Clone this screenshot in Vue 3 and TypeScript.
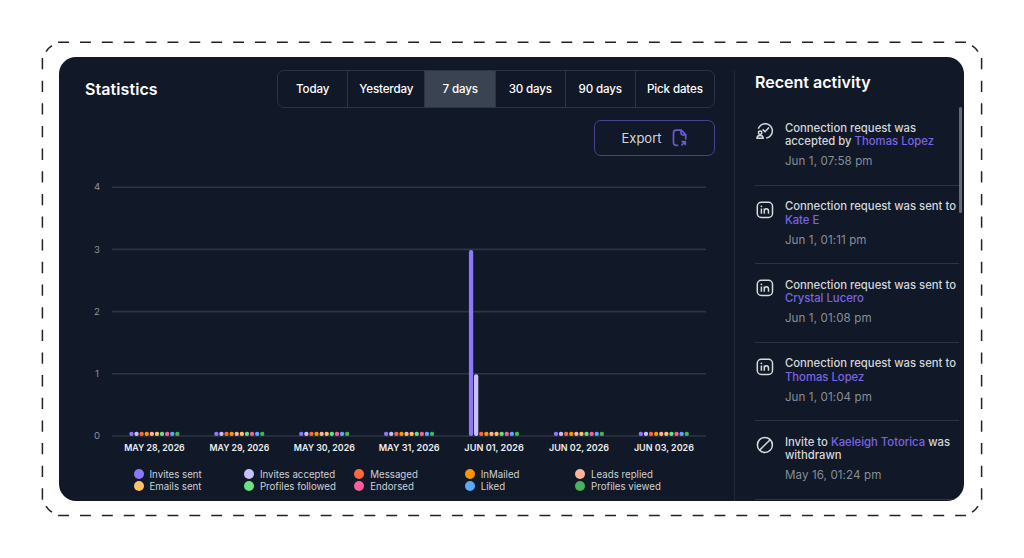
<script setup lang="ts">
import { ref } from "vue";

interface Activity {
  icon: "accepted" | "linkedin" | "withdrawn";
  before: string;
  name: string;
  after?: string;
  date: string;
}

const ranges = ["Today", "Yesterday", "7 days", "30 days", "90 days", "Pick dates"];
const activeRange = ref("7 days");

const series = [
  { label: "Invites sent", color: "#8b78ff" },
  { label: "Invites accepted", color: "#c9bfff" },
  { label: "Messaged", color: "#ff6838" },
  { label: "InMailed", color: "#ff9500" },
  { label: "Leads replied", color: "#ffb39e" },
  { label: "Emails sent", color: "#ffc266" },
  { label: "Profiles followed", color: "#68e384" },
  { label: "Endorsed", color: "#ff5c9c" },
  { label: "Liked", color: "#57abff" },
  { label: "Profiles viewed", color: "#43b659" },
];

const days = [
  { label: "MAY 28, 2026", width: 60.5, values: [] as number[] },
  { label: "MAY 29, 2026", width: 60, values: [] },
  { label: "MAY 30, 2026", width: 61, values: [] },
  { label: "MAY 31, 2026", width: 61, values: [] },
  { label: "JUN 01, 2026", width: 59.5, values: [3, 1] },
  { label: "JUN 02, 2026", width: 60, values: [] },
  { label: "JUN 03, 2026", width: 60, values: [] },
];

// chart geometry
const baseline = 266;
const unit = 62.2;
const step = 84.9;
const dayCenter = (i: number) => 69.5 + i * step;
const barX = (day: number, s: number) => dayCenter(day) - 25.2 + s * 5.1;
const barHeight = (value: number) => (value ? value * unit - 0.5 : 4.2);

const activities: Activity[] = [
  {
    icon: "accepted",
    before: "Connection request was accepted by ",
    name: "Thomas Lopez",
    date: "Jun 1, 07:58 pm",
  },
  {
    icon: "linkedin",
    before: "Connection request was sent to ",
    name: "Kate E",
    date: "Jun 1, 01:11 pm",
  },
  {
    icon: "linkedin",
    before: "Connection request was sent to ",
    name: "Crystal Lucero",
    date: "Jun 1, 01:08 pm",
  },
  {
    icon: "linkedin",
    before: "Connection request was sent to ",
    name: "Thomas Lopez",
    date: "Jun 1, 01:04 pm",
  },
  {
    icon: "withdrawn",
    before: "Invite to ",
    name: "Kaeleigh Totorica",
    after: " was withdrawn",
    date: "May 16, 01:24 pm",
  },
];
</script>

<template>
  <div class="page">
    <svg class="frame" width="1024" height="558" viewBox="0 0 1024 558">
      <path d="M58.1 42.3H966M58.1 515.4H966" stroke-dasharray="10.9 10.98" />
      <path d="M42.4 58V500M981.6 58V500" stroke-dasharray="11.3 11.35" />
      <path
        d="M46 51.6Q48.4 47.8 52 45.6M978 51.6Q975.6 47.8 972 45.6M46 506.2Q48.4 510 52 512.2M978 506.2Q975.6 510 972 512.2"
      />
    </svg>
    <div class="card">
      <main class="stats">
        <div class="head">
          <h1>Statistics</h1>
          <div class="ranges">
            <button
              v-for="range in ranges"
              :key="range"
              :class="{ active: range === activeRange }"
              @click="activeRange = range"
            >
              {{ range }}
            </button>
          </div>
        </div>
        <button class="export">
          <span>Export</span>
          <svg width="16" height="18" viewBox="0 0 16 18">
            <path
              d="M6.2 16.3H4.2Q1.5 16.3 1.5 13.6V3.9Q1.5 1.2 4.2 1.2H9.3L13.7 5.6V10.4"
            />
            <path d="M9 1.4V4.2Q9 5.8 10.6 5.8H13.5" />
            <path d="M9.5 12.6H13.3V16.3M13 12.9L9.4 16.5" />
          </svg>
        </button>

        <svg class="chart" width="630" height="290" viewBox="0 0 630 290">
          <g v-for="n in 5" :key="n">
            <line
              class="grid"
              x1="27"
              x2="621"
              :y1="baseline - (n - 1) * unit"
              :y2="baseline - (n - 1) * unit"
            />
            <text class="tick" x="12" :y="baseline - (n - 1) * unit + 3.2">
              {{ n - 1 }}
            </text>
          </g>
          <g v-for="(day, i) in days" :key="day.label">
            <rect
              v-for="(s, j) in series"
              :key="s.label"
              :x="barX(i, j)"
              :y="baseline - barHeight(day.values[j])"
              width="4.3"
              :height="barHeight(day.values[j])"
              rx="2"
              :fill="s.color"
            />
            <text
              class="day"
              :x="dayCenter(i)"
              y="281"
              :textLength="day.width"
              lengthAdjust="spacingAndGlyphs"
            >
              {{ day.label }}
            </text>
          </g>
        </svg>

        <ul class="legend">
          <li v-for="s in series" :key="s.label">
            <i :style="{ background: s.color }"></i>{{ s.label }}
          </li>
        </ul>
      </main>

      <aside class="recent">
        <h2>Recent activity</h2>
        <div class="list">
          <article v-for="(item, i) in activities" :key="i">
            <svg class="icon" width="18" height="18" viewBox="0 0 18 18">
              <template v-if="item.icon === 'accepted'">
                <path d="M2.3 6.8A7.2 7.2 0 1 1 10.1 16" />
                <path d="M6.6 7.4L9 9.8L13 5.6" />
                <circle cx="4.1" cy="10.8" r="1.7" />
                <path d="M1 16.2Q1 13.5 4.1 13.5T7.2 16.2Z" />
              </template>
              <template v-else-if="item.icon === 'linkedin'">
                <rect x="1.3" y="1.3" width="15.2" height="15.2" rx="4" />
                <path d="M5.4 7.6V12.8M8.3 12.8V7.6M8.3 10Q8.3 7.7 10.4 7.7T12.5 10V12.8" />
                <circle class="dot" cx="5.4" cy="5.3" r="0.9" />
              </template>
              <template v-else>
                <circle cx="8.9" cy="8.9" r="7.5" />
                <path d="M3.7 14.1L14.1 3.7" />
              </template>
            </svg>
            <div class="text">
              <p>
                {{ item.before }}<a>{{ item.name }}</a
                >{{ item.after }}
              </p>
              <time>{{ item.date }}</time>
            </div>
          </article>
        </div>
        <div class="scrollbar"></div>
      </aside>
    </div>
  </div>
</template>

<style>
body {
  margin: 0;
  background: #fff;
  overflow: hidden;
}
</style>

<style scoped>
* {
  box-sizing: border-box;
}
.page {
  position: relative;
  width: 1024px;
  height: 558px;
  padding: 56.5px 59px;
  font-family: Inter, "Liberation Sans", sans-serif;
}
.frame {
  position: absolute;
  inset: 0;
  fill: none;
  stroke: #222;
  stroke-width: 1.5;
}
.card {
  display: flex;
  width: 905.4px;
  height: 444.5px;
  border-radius: 17px;
  overflow: hidden;
  background: #111827;
  color: #fff;
}
.stats {
  width: 676px;
  padding: 13.5px 0 0 26px;
  display: flex;
  flex-direction: column;
}
.head {
  display: flex;
  justify-content: space-between;
  width: 630px;
  height: 38px;
}
h1,
h2 {
  margin: 0;
  font-weight: 600;
  font-size: 16px;
  line-height: 20px;
  white-space: nowrap;
}
h1 {
  margin-top: 9px;
  letter-spacing: 0.08px;
}
.ranges {
  display: grid;
  grid-template-columns: 69.3px 77px 70.7px 69.5px 70.3px 79.2px;
  border: 1px solid #2d3544;
  border-radius: 7px;
  overflow: hidden;
}
button {
  font-family: inherit;
  color: #fff;
  background: none;
  padding: 0;
  white-space: nowrap;
}
.ranges button {
  border: 0;
  border-left: 1px solid #2d3544;
  padding-bottom: 1px;
  font-size: 11.6px;
  font-weight: 500;
  letter-spacing: -0.15px;
}
.ranges button:first-child {
  border-left: 0;
}
.ranges .active {
  background: #3a4352;
}
.export {
  display: flex;
  align-items: center;
  justify-content: center;
  gap: 10px;
  width: 121px;
  height: 36px;
  margin: 11.5px 0 0 509px;
  border: 1.5px solid #4c4095;
  border-radius: 7px;
  font-size: 13px;
  color: #d5d7da;
}
.export svg {
  fill: none;
  stroke: #6c59cc;
  stroke-width: 1.7;
  stroke-linejoin: round;
}
.chart {
  margin-top: 14px;
  flex: none;
}
.grid {
  stroke: #2d3443;
  stroke-width: 1.6;
}
.tick {
  font-size: 9.6px;
  fill: #8d929c;
  text-anchor: middle;
}
.day {
  font-size: 9.5px;
  font-weight: 600;
  fill: #eceef0;
  text-anchor: middle;
}
.legend {
  display: grid;
  grid-template-columns: repeat(5, 110.4px);
  grid-auto-rows: 12.3px;
  list-style: none;
  margin: 8.5px 0 0 48.5px;
  padding: 0;
  font-size: 9.7px;
  color: #ced1d5;
}
.legend li {
  display: flex;
  align-items: center;
  gap: 6px;
  white-space: nowrap;
}
.legend i {
  width: 10px;
  height: 10px;
  border-radius: 50%;
}
.recent {
  position: relative;
  flex: 1;
  margin-top: 13.5px;
  padding: 2px 5.5px 0 20px;
  border-left: 1px solid #222a38;
}
h2 {
  letter-spacing: 0.03px;
}
.list {
  margin-top: 15px;
}
article {
  display: flex;
  gap: 11px;
  height: 78.6px;
  padding-top: 14px;
  border-bottom: 1px solid #2d3544;
}
.icon {
  flex: none;
  margin: 1px 0 0 1px;
  fill: none;
  stroke: #d8dadd;
  stroke-width: 1.5;
}
.icon .dot {
  fill: #d8dadd;
  stroke: none;
}
.text {
  padding-top: 0.7px;
  white-space: nowrap;
}
p {
  width: 174px;
  margin: 0;
  white-space: normal;
  font-size: 11.3px;
  font-weight: 500;
  line-height: 13.4px;
  color: #d3d6da;
}
a {
  color: #7965e2;
}
time {
  display: block;
  margin-top: 5.5px;
  font-size: 11.6px;
  line-height: 14px;
  letter-spacing: 0.1px;
  color: #888e99;
}
.scrollbar {
  position: absolute;
  top: 37px;
  right: 2.5px;
  width: 3px;
  height: 106px;
  border-radius: 2px;
  background: #646a78;
}
</style>
